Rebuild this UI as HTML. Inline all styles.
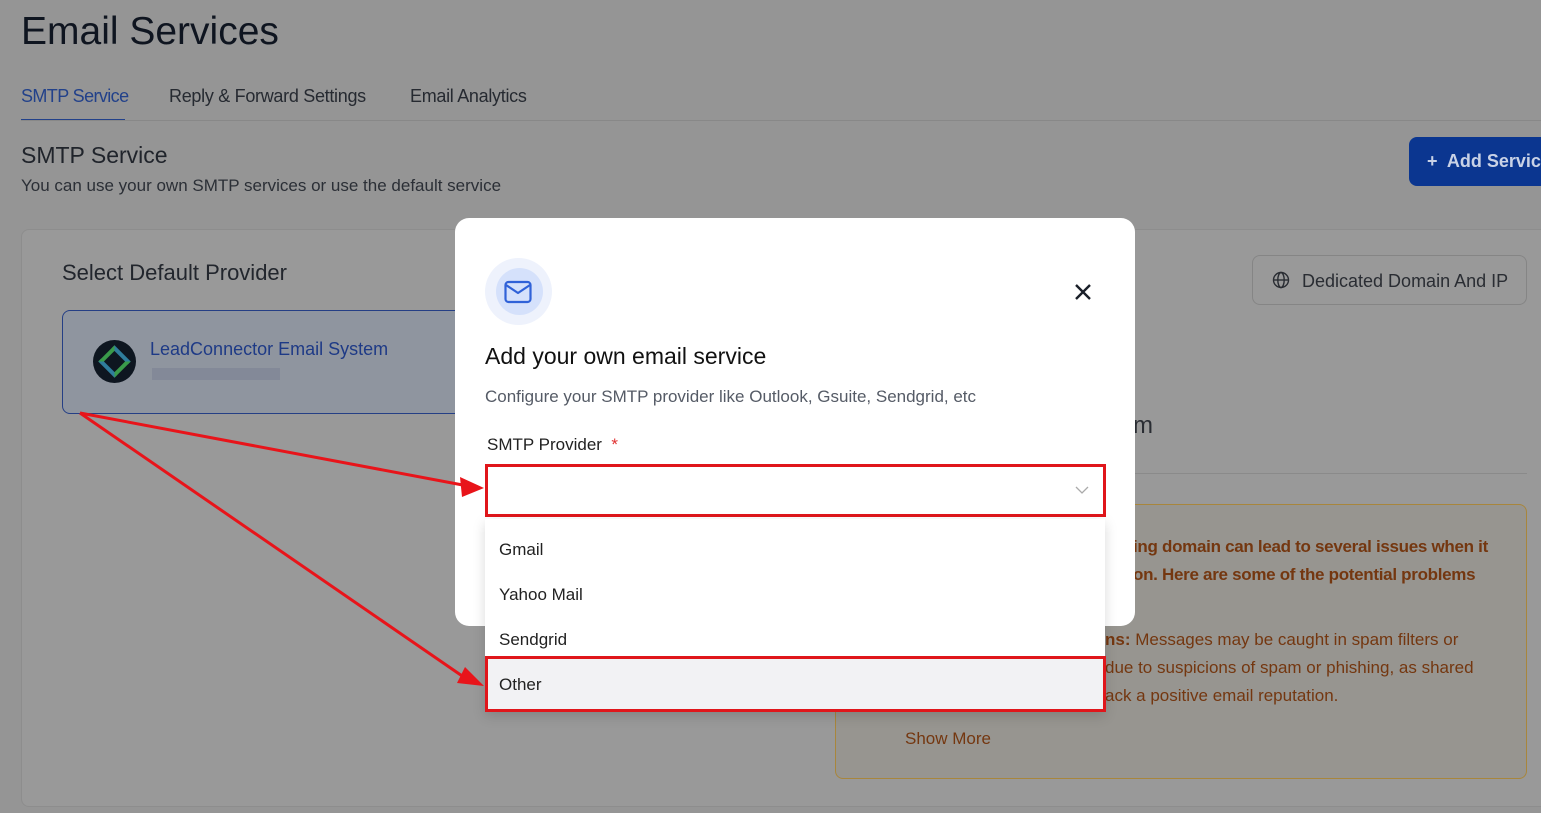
<!DOCTYPE html>
<html><head><meta charset="utf-8"><style>
*{box-sizing:border-box;margin:0;padding:0}
body{width:1541px;height:813px;overflow:hidden;background:#959595;font-family:"Liberation Sans",sans-serif;position:relative;color:#1a1f29}
.abs{position:absolute}
</style></head><body>
<div class="abs" style="left:21px;top:10px;font-size:39px;color:#0f1520">Email Services</div>
<div class="abs" style="left:21px;top:86px;font-size:18px;color:#22418a;letter-spacing:-0.6px">SMTP Service</div>
<div class="abs" style="left:169px;top:86px;font-size:18px;color:#262a31;letter-spacing:-0.3px">Reply &amp; Forward Settings</div>
<div class="abs" style="left:410px;top:86px;font-size:18px;color:#262a31;letter-spacing:-0.3px">Email Analytics</div>
<div class="abs" style="left:21px;top:119px;width:104px;height:2px;background:#22418a"></div>
<div class="abs" style="left:21px;top:120px;width:1520px;height:1px;background:#888"></div>
<div class="abs" style="left:21px;top:142px;font-size:23px;color:#20242b">SMTP Service</div>
<div class="abs" style="left:21px;top:176px;font-size:17px;color:#2b2f36">You can use your own SMTP services or use the default service</div>
<div class="abs" style="left:1409px;top:137px;width:150px;height:49px;background:#0b3690;border-radius:8px;color:#c9d2e6;font-size:18px;font-weight:bold;padding:14px 0 0 18px">+&nbsp; Add Service</div>
<div class="abs" style="left:21px;top:229px;width:1540px;height:578px;background:#999;border:1px solid #8d8d8d;border-radius:8px"></div>
<div class="abs" style="left:62px;top:260px;font-size:22px;color:#22262d">Select Default Provider</div>
<div class="abs" style="left:62px;top:310px;width:420px;height:104px;background:#8f959f;border:1px solid #253f85;border-radius:8px"></div>
<div class="abs" style="left:93px;top:340px;width:43px;height:43px;border-radius:50%;background:#0e1620"></div>
<div class="abs" style="left:103px;top:350px;width:23px;height:23px;border:4px solid #2f7d9c;transform:rotate(45deg);border-left-color:#3a9a4a;border-right-color:#3a9a4a"></div>
<div class="abs" style="left:150px;top:339px;font-size:18px;color:#1e3a86">LeadConnector Email System</div>
<div class="abs" style="left:152px;top:368px;width:128px;height:12px;background:#7f8696;opacity:.8"></div>
<div class="abs" style="left:1252px;top:255px;width:275px;height:50px;border:1px solid #858585;border-radius:8px;font-size:18px;color:#2a2d33;padding:15px 0 0 49px">Dedicated Domain And IP</div>
<svg class="abs" style="left:1272px;top:271px" width="18" height="18" viewBox="0 0 18 18" fill="none" stroke="#2a2d33" stroke-width="1.4"><circle cx="9" cy="9" r="7.5"/><ellipse cx="9" cy="9" rx="3.2" ry="7.5"/><path d="M1.5 9h15"/></svg>
<div class="abs" style="left:1133px;top:412px;font-size:24px;color:#2a2d33">m</div>
<div class="abs" style="left:1130px;top:473px;width:397px;height:1px;background:#8a8a8a"></div>
<div class="abs" style="left:835px;top:504px;width:692px;height:275px;border:1px solid #a8863c;border-radius:8px;background:#979590"></div>
<div class="abs" style="left:1133px;top:533px;font-size:17px;line-height:28px;color:#743710;font-weight:bold;letter-spacing:-0.3px">ing domain can lead to several issues when it<br>on. Here are some of the potential problems</div>
<div class="abs" style="left:1105px;top:626px;font-size:17px;line-height:28px;color:#743710"><b>ns:</b> Messages may be caught in spam filters or<br>due to suspicions of spam or phishing, as shared<br>ack a positive email reputation.</div>
<div class="abs" style="left:905px;top:729px;font-size:17px;color:#743710">Show More</div>

<div class="abs" style="left:455px;top:218px;width:680px;height:408px;background:#fff;border-radius:14px"></div>
<div class="abs" style="left:485px;top:258px;width:67px;height:67px;border-radius:50%;background:#eef2fc"></div>
<div class="abs" style="left:496px;top:268px;width:47px;height:47px;border-radius:50%;background:#d5e1fb"></div>
<svg class="abs" style="left:504px;top:280px" width="28" height="24" viewBox="0 0 28 24" fill="none" stroke="#3062d8" stroke-width="2.2" stroke-linejoin="round"><rect x="1.5" y="2" width="25" height="20" rx="3"/><path d="M2 5l12 8 12-8"/></svg>
<svg class="abs" style="left:1074px;top:283px" width="18" height="18" viewBox="0 0 18 18" stroke="#1a1f29" stroke-width="2.4"><path d="M2 2l14 14M16 2L2 16"/></svg>
<div class="abs" style="left:485px;top:343px;font-size:23px;color:#111">Add your own email service</div>
<div class="abs" style="left:485px;top:387px;font-size:17px;color:#555b66">Configure your SMTP provider like Outlook, Gsuite, Sendgrid, etc</div>
<div class="abs" style="left:487px;top:435px;font-size:17px;color:#222">SMTP Provider <span style="color:#e03030">&nbsp;*</span></div>
<div class="abs" style="left:485px;top:464px;width:621px;height:53px;border:3px solid #e0161b;background:#fff"></div>
<svg class="abs" style="left:1075px;top:486px" width="14" height="9" viewBox="0 0 14 9" fill="none" stroke="#aaa" stroke-width="1.3"><path d="M1 1l6 6 6-6"/></svg>
<div class="abs" style="left:485px;top:519px;width:620px;height:193px;background:#fff;box-shadow:0 4px 12px rgba(0,0,0,.15)"></div>
<div class="abs" style="left:499px;top:540px;font-size:17px;color:#222">Gmail</div>
<div class="abs" style="left:499px;top:585px;font-size:17px;color:#222">Yahoo Mail</div>
<div class="abs" style="left:499px;top:630px;font-size:17px;color:#222">Sendgrid</div>
<div class="abs" style="left:485px;top:656px;width:621px;height:56px;border:3px solid #e0161b;background:#f2f2f4"></div>
<div class="abs" style="left:499px;top:675px;font-size:17px;color:#222">Other</div>

<svg class="abs" style="left:0;top:0" width="1541" height="813">
<g stroke="#e8141a" stroke-width="3" fill="none">
<path d="M80 413L468 486"/><path d="M80 413L468 680"/></g>
<path d="M484 488L460 477L462 497z" fill="#e8141a"/>
<path d="M484 686L465 667L457 683z" fill="#e8141a"/>
</svg>
</body></html>
